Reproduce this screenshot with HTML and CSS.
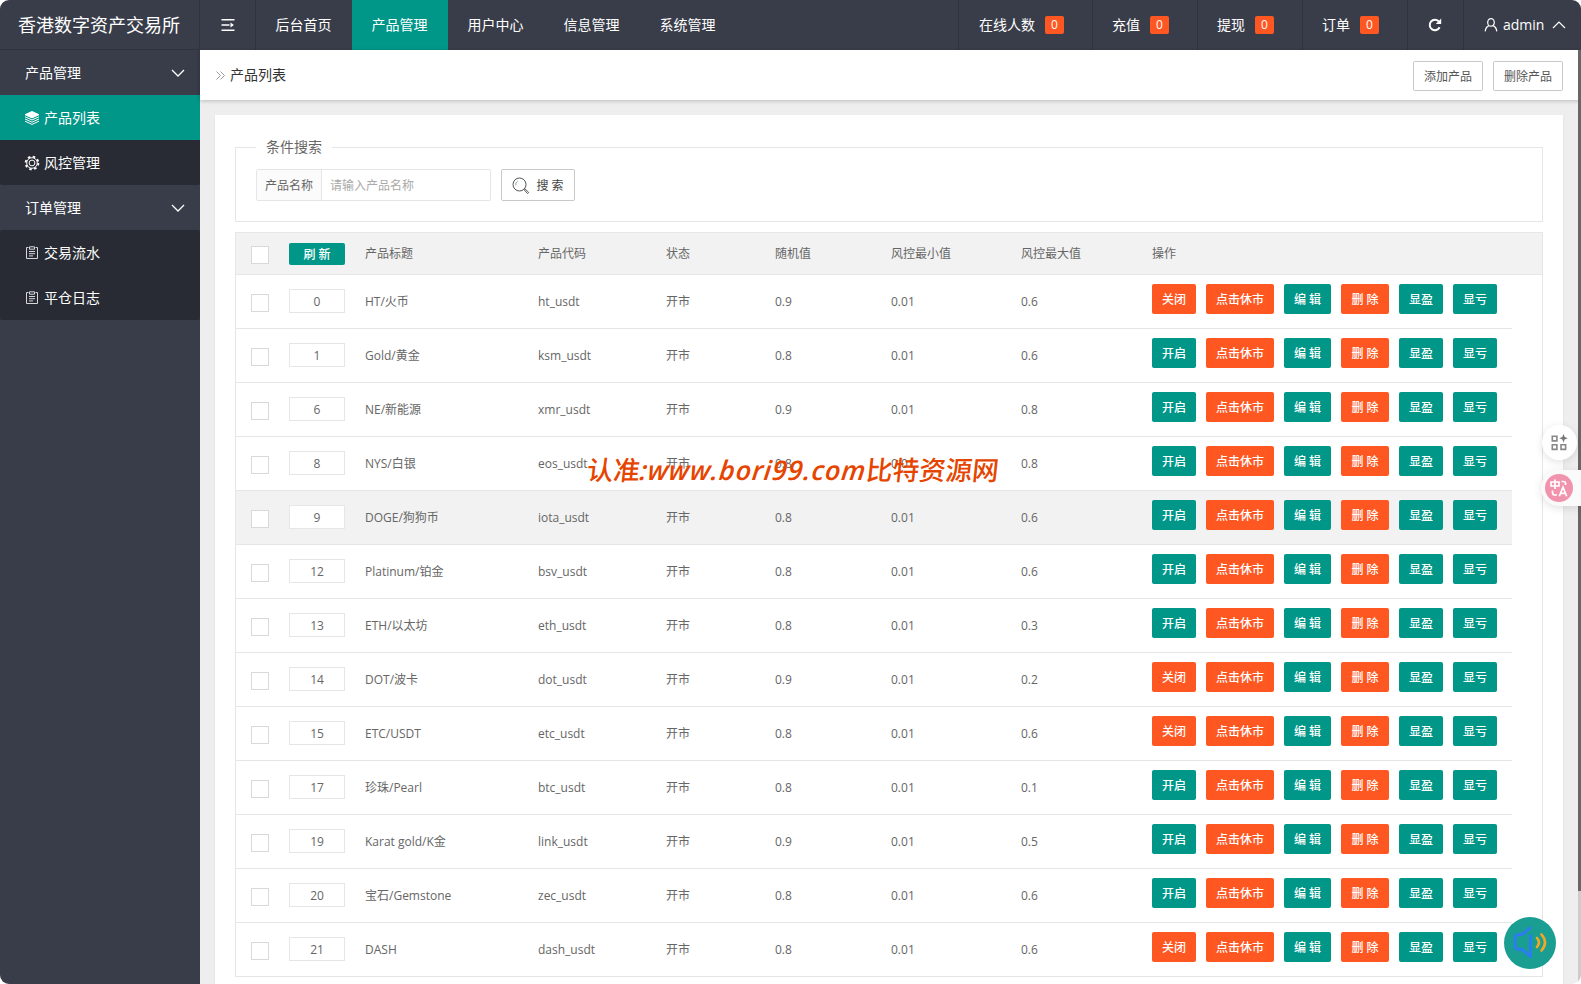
FILE: index.html
```html
<!DOCTYPE html>
<html lang="zh-CN">
<head>
<meta charset="utf-8">
<title>产品列表</title>
<link rel="stylesheet" href="styles.css">
</head>
<body>
<div class="window">
  <header class="header">
    <div class="logo">香港数字资产交易所</div>
    <div class="collapse"><svg width="14" height="14" viewBox="0 0 14 14" fill="none" stroke="#fff" stroke-width="1.6"><path d="M0.5 1.8h13M0.5 7h8M0.5 12.2h13"/><path d="M9.500 4.400l3.400 2.600-3.400 2.600z" fill="#fff" stroke="none"/></svg></div>
    <nav class="nav">
      <a>后台首页</a><a class="on">产品管理</a><a>用户中心</a><a>信息管理</a><a>系统管理</a>
    </nav>
    <div class="stats">
      <div class="stat stat-wide">在线人数<span class="badge">0</span></div>
      <div class="stat">充值<span class="badge">0</span></div>
      <div class="stat">提现<span class="badge">0</span></div>
      <div class="stat">订单<span class="badge">0</span></div>
      <div class="reload"><svg width="14" height="14" viewBox="0 0 14 14" fill="none" stroke="#fff" stroke-width="2"><path d="M11.600 9.300A5.200 5.200 0 1 1 10.700 3.400"/><path d="M13.200 0.600v5.400H7.800z" fill="#fff" stroke="none"/></svg></div>
      <div class="user"><svg width="14" height="14" viewBox="0 0 14 14" fill="none" stroke="#fff" stroke-width="1.200"><ellipse cx="7" cy="4.400" rx="3.300" ry="3.800"/><path d="M5 7.600C2.800 8.500 1.500 10.500 1.200 13.400M9 7.600c2.200.9 3.500 2.900 3.800 5.800"/></svg><span class="name">admin</span><svg width="14" height="8" viewBox="0 0 14 8" fill="none" stroke="#fff" stroke-width="1.200"><path d="M1 7l6-6 6 6"/></svg></div>
    </div>
  </header>
  <div class="body">
    <aside class="side">
      <div class="group">产品管理<svg width="14" height="8" viewBox="0 0 14 8" fill="none" stroke="#fff" stroke-width="1.300"><path d="M1 1l6 6 6-6"/></svg></div>
      <div class="sub">
        <a class="on"><svg width="16" height="14" viewBox="0 0 16 14" fill="none" stroke="#fff" stroke-width="1"><path d="M8 .5l7 3.200-7 3.200-7-3.200z" fill="#fff"/><path d="M1 5.800l7 3.200 7-3.200M1 8l7 3.200L15 8M1 10.200l7 3.200 7-3.200"/></svg>产品列表</a>
        <a><svg width="16" height="16" viewBox="0 0 16 16" fill="none" stroke="#fff"><circle cx="8" cy="8" r="6.400" stroke-width="1.800" stroke-dasharray="2.500 2.527"/><circle cx="8" cy="8" r="5.300"/><circle cx="8" cy="8" r="2.900"/></svg>风控管理</a>
      </div>
      <div class="group">订单管理<svg width="14" height="8" viewBox="0 0 14 8" fill="none" stroke="#fff" stroke-width="1.300"><path d="M1 1l6 6 6-6"/></svg></div>
      <div class="sub">
        <a><svg width="16" height="14" viewBox="0 0 16 14" fill="none" stroke="#d5d7dc"><path d="M4.500 1.500h-2v11h11v-11h-2M5.500 .8h5v2.400h-5zM5 5.500h6M5 7.700h6M5 9.900h4"/></svg>交易流水</a>
        <a><svg width="16" height="14" viewBox="0 0 16 14" fill="none" stroke="#d5d7dc"><path d="M4.500 1.500h-2v11h11v-11h-2M5.500 .8h5v2.400h-5zM5 5.500h6M5 7.700h6M5 9.900h4"/></svg>平仓日志</a>
      </div>
    </aside>
    <main class="main">
      <div class="crumb">
        <svg width="9" height="9" viewBox="0 0 9 9" fill="none" stroke="#999"><path d="M.5.5l4 4-4 4M4.500.5l4 4-4 4"/></svg>
        <span class="title">产品列表</span>
        <button class="btn-line">添加产品</button>
        <button class="btn-line">删除产品</button>
      </div>
      <div class="card">
        <section class="search">
          <h2 class="legend">条件搜索</h2>
          <div class="field"><label>产品名称</label><input type="text" placeholder="请输入产品名称"></div>
          <button class="btn-search"><svg width="18" height="18" viewBox="0 0 18 18" fill="none" stroke="#555"><circle cx="7.500" cy="7.500" r="6.500"/><path d="M3.800 8.500a4 4 0 0 1 2-4.500" stroke="#8aa"/><path d="M12 12.700l.9-.9 3.800 3.600-1.100 1.200z"/></svg>搜 索</button>
        </section>
        <div class="table">
          <div class="row head">
            <span class="check"></span><span><button class="refresh">刷 新</button></span><span>产品标题</span><span>产品代码</span><span>状态</span><span>随机值</span><span>风控最小值</span><span>风控最大值</span><span>操作</span>
          </div>
          <div id="rows"></div>
        </div>
      </div>
    </main>
  </div>
  <div class="scrollbar"></div>
  <div class="tool-grid"><svg width="17" height="17" viewBox="0 0 17 17" fill="none" stroke="#888" stroke-width="1.600"><path d="M1.300 2.300h4.600v4.600H1.300zM1.300 10.800h4.600v4.600H1.300zM10 10.800h4.600v4.600H10z"/><path d="M12.500 0l1.200 3 3 1.200-3 1.200-1.200 3-1.200-3-3-1.200 3-1.200z" fill="#777" stroke="none"/></svg></div>
  <div class="tool-lang"><div class="lang"><svg width="18" height="18" viewBox="0 0 18 18" fill="none" stroke="#fff" stroke-width="1.700"><path d="M1 3h8v4H1zM5 .5v9.500M11.500 2.500h2q2 0 2 2v1.500M2.500 11.500v2q0 2.500 2.500 2.500h2M9.300 17.200l3.700-9 3.700 9M10.500 14.300h5"/></svg></div></div>
  <div class="sound"><svg width="34" height="34" viewBox="0 0 34 34" fill="none" stroke-width="3" stroke-linecap="round" stroke-linejoin="round"><path d="M17 2l-8 6.500H5.500Q2 9 2 13v6q0 4 3.500 4.500H9l8.500 7V9.500" stroke="#2b7df0"/><path d="M24 12q4 4.500 0 9M28.500 8.500q7 8 0 16" stroke="#f5a623" stroke-width="2.600"/></svg></div>
  <div class="watermark">认准<span class="url">:www.bori99.com</span>比特资源网</div>
</div>
<script src="app.js"></script>
</body>
</html>
```
FILE: app.js
```js
// order, title, code, random value, risk max, enabled
const products = [
  [0, 'HT/火币', 'ht_usdt', '0.9', '0.6', false],
  [1, 'Gold/黄金', 'ksm_usdt', '0.8', '0.6', true],
  [6, 'NE/新能源', 'xmr_usdt', '0.9', '0.8', true],
  [8, 'NYS/白银', 'eos_usdt', '0.8', '0.8', true],
  [9, 'DOGE/狗狗币', 'iota_usdt', '0.8', '0.6', true],
  [12, 'Platinum/铂金', 'bsv_usdt', '0.8', '0.6', true],
  [13, 'ETH/以太坊', 'eth_usdt', '0.8', '0.3', true],
  [14, 'DOT/波卡', 'dot_usdt', '0.9', '0.2', false],
  [15, 'ETC/USDT', 'etc_usdt', '0.8', '0.6', false],
  [17, '珍珠/Pearl', 'btc_usdt', '0.8', '0.1', true],
  [19, 'Karat gold/K金', 'link_usdt', '0.9', '0.5', true],
  [20, '宝石/Gemstone', 'zec_usdt', '0.8', '0.6', true],
  [21, 'DASH', 'dash_usdt', '0.8', '0.6', false]
];
document.getElementById('rows').innerHTML = products.map(([order, title, code, rand, max, on]) => `
  <div class="row item${order === 9 ? ' hover' : ''}">
    <span class="check"></span><span><span class="order">${order}</span></span>
    <span>${title}</span><span>${code}</span><span>开市</span><span>${rand}</span><span>0.01</span><span>${max}</span>
    <span class="ops">
      <button class="${on ? 'green' : 'red'}">${on ? '开启' : '关闭'}</button><button class="red long">点击休市</button><button class="green edit">编 辑</button><button class="red del">删 除</button><button class="green">显盈</button><button class="green">显亏</button>
    </span>
  </div>`).join('');
```
FILE: styles.css
```css
* { box-sizing: border-box; }
body { margin: 0; background: #fff; font: 14px/24px "Open Sans", "Noto Sans CJK SC", sans-serif; color: #666; }
button, input { font: inherit; margin: 0; padding: 0; }
svg { display: block; flex: none; }
.window { position: relative; width: 1581px; height: 984px; border-radius: 9px; overflow: hidden; background: #eee; display: flex; flex-direction: column; }

.header { display: flex; height: 50px; flex: none; background: #393d49; color: #fff; line-height: 50px; }
.logo { width: 200px; padding-left: 18px; font-size: 18px; border-right: 1px solid #30333d; border-bottom: 1px solid #30333d; white-space: nowrap; }
.collapse { width: 56px; border-right: 1px solid #30333d; display: flex; align-items: center; justify-content: center; }
.nav { display: flex; flex: 1; }
.nav a { width: 96px; padding-right: 1px; text-align: center; }
.nav .on { background: #009688; }
.stats { display: flex; }
.stat { width: 105px; padding-left: 19px; border-left: 1px solid #30333d; display: flex; align-items: center; }
.stat-wide { width: 134px; padding-left: 20px; }
.badge { width: 19px; height: 18px; margin-left: 10px; border-radius: 2px; background: #ff5722; font-size: 12px; line-height: 18px; text-align: center; }
.reload { width: 56px; padding-right: 2px; border-left: 1px solid #30333d; display: flex; align-items: center; justify-content: center; }
.user { width: 118px; padding-left: 20px; border-left: 1px solid #30333d; display: flex; align-items: center; }
.name { margin: 0 8px 0 5px; }

.body { display: flex; flex: 1; min-height: 0; }
.side { width: 200px; background: #393d49; color: #fff; line-height: 45px; }
.group { height: 45px; padding: 0 15px 0 25px; display: flex; align-items: center; justify-content: space-between; }
.sub { background: #282b33; border-radius: 2px; }
.sub a { height: 45px; padding-left: 24px; display: flex; align-items: center; gap: 4px; }
.sub .on { background: #009688; }

.main { flex: 1; min-width: 0; display: flex; flex-direction: column; }
.crumb { height: 50px; flex: none; background: #fff; box-shadow: 0 1px 4px rgba(0,0,0,.22); display: flex; align-items: center; gap: 10px; padding: 0 18px 0 16px; }
.title { flex: 1; margin-left: -5px; color: #333; }
.btn-line { height: 30px; width: 70px; margin-top: 2px; padding-top: 1px; border: 1px solid #c9c9c9; border-radius: 2px; background: #fff; color: #555; font-size: 12px; }
.card { flex: 1; margin: 15px 18px 0 15px; padding: 32px 20px 0; background: #fff; box-shadow: 0 1px 2px rgba(0,0,0,.08); }

.search { height: 75px; padding: 0 20px; border: 1px solid #e6e6e6; display: grid; grid-template: 21px 32px / 235px 74px; column-gap: 10px; align-content: start; }
.legend { grid-column: 1 / 3; justify-self: start; margin: -13px 0 0; height: 24px; padding: 0 10px; background: #fff; font-size: 14px; font-weight: 400; line-height: 24px; color: #666; }
.field { display: flex; border: 1px solid #e6e6e6; border-radius: 2px; font-size: 12px; line-height: 32px; }
.field label { width: 65px; background: #fbfbfb; border-right: 1px solid #e6e6e6; text-align: center; }
.field input { flex: 1; min-width: 0; border: 0; padding: 2px 0 0 8px; background: transparent; outline: 0; }
.field input::placeholder { color: #aaa; }
.btn-search { display: flex; align-items: center; justify-content: center; gap: 6px; padding-top: 1px; border: 1px solid #c9c9c9; border-radius: 2px; background: #fff; color: #444; font-size: 12px; }

.table { margin-top: 10px; border: 1px solid #e6e6e6; border-bottom: 0; font-size: 12px; }
.row { display: grid; grid-template-columns: 38px 76px 173px 128px 109px 116px 130px 131px 375px; align-items: center; }
.row > span { padding-left: 15px; white-space: nowrap; }
.row > .check { width: 18px; height: 18px; margin: 3px 0 0 15px; padding: 0; border: 1px solid #d9d9d9; background: #fff; }
.head { width: 1306px; height: 42px; background: #f2f2f2; border-bottom: 1px solid #e6e6e6; }
.item { width: 1276px; height: 54px; border-bottom: 1px solid #e6e6e6; }
.item:last-child { width: 1306px; }
.hover { background: #f2f2f2; }
.refresh { display: block; width: 56px; height: 22px; border: 0; border-radius: 2px; background: #009688; color: #fff; font-weight: 500; }
.order { display: block; width: 56px; height: 24px; margin-top: -2px; border: 1px solid #e6e6e6; background: #fff; line-height: 23px; text-align: center; }
.ops { display: flex; gap: 10px; margin-top: -5px; }
.ops button { width: 44px; height: 30px; padding-top: 2px; border: 0; border-radius: 2px; color: #fff; font-weight: 500; }
.ops .long { width: 68px; }
.ops .edit { width: 47px; }
.ops .del { width: 48px; }
.green { background: #009688; }
.red { background: #ff5722; }

.scrollbar { position: absolute; right: 0; top: 50px; width: 3px; height: 934px; background: linear-gradient(#666 841px, #ccc 841px); }
.tool-grid { position: absolute; left: 1542px; top: 425px; width: 35px; height: 35px; border-radius: 50%; background: rgba(255,255,255,.94); box-shadow: 0 2px 8px rgba(0,0,0,.12); display: flex; align-items: center; justify-content: center; }
.tool-lang { position: absolute; left: 1541px; top: 470px; width: 40px; height: 36px; padding: 4px; border-radius: 18px 0 0 18px; background: #fafafa; box-shadow: 0 2px 8px rgba(0,0,0,.12); }
.lang { width: 28px; height: 28px; border-radius: 50%; background: #f193ad; display: flex; align-items: center; justify-content: center; }
.sound { position: absolute; left: 1504px; top: 917px; width: 52px; height: 52px; border-radius: 50%; background: #1a9e91; display: flex; align-items: center; justify-content: center; }
.watermark { position: absolute; left: 587px; top: 450px; color: #e64500; font: 500 26.500px/40px "Open Sans", "Noto Sans CJK SC", sans-serif; white-space: nowrap; transform: skewX(-6deg); }
.url { font-size: 27px; font-weight: 600; font-style: italic; letter-spacing: .8px; }
```
